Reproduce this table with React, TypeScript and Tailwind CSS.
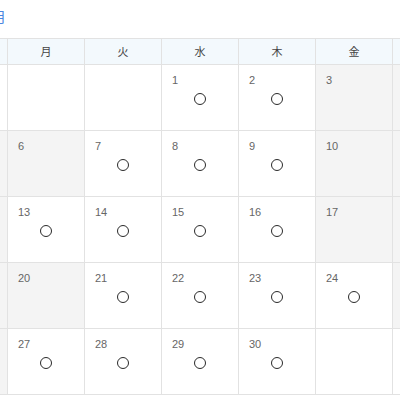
import React from 'react';

const WEEKDAYS = ['日', '月', '火', '水', '木', '金', '土'];

// closed days (besides weekends)
const CLOSED = [3, 6, 10, 17, 20];
const OPEN = [1, 2, 7, 8, 9, 13, 14, 15, 16, 21, 22, 23, 24, 27, 28, 29, 30];

const FIRST_WEEKDAY = 3; // 1日 = 水曜日
const DAYS_IN_MONTH = 30;

export default function App() {
  const cells: (number | null)[] = [];
  for (let i = 0; i < FIRST_WEEKDAY; i++) cells.push(null);
  for (let d = 1; d <= DAYS_IN_MONTH; d++) cells.push(d);
  while (cells.length % 7 !== 0) cells.push(null);

  return (
    <div
      className="w-[400px] h-[400px] overflow-hidden bg-white"
      style={{ fontFamily: '"Noto Sans CJK JP", "Noto Sans", sans-serif' }}
    >
      <div className="ml-[-69px] w-[539px]">
        {/* Month title */}
        <div className="h-[38px] w-[75px] pt-[6px] text-right text-[14px] leading-[20px] text-[#4a86e0]">
          11月
        </div>

        <div className="grid grid-cols-[repeat(7,77px)] border-t border-[#e2e2e2]">
          {WEEKDAYS.map(w => (
            <div
              key={w}
              className="h-[26px] flex items-center justify-center bg-[#f3f9fd] border-r border-b border-[#e2e2e2] text-[11px] text-[#444]"
            >
              {w}
            </div>
          ))}

          {cells.map((day, i) => {
            const weekday = i % 7;
            const gray =
              day !== null && (weekday === 0 || weekday === 6 || CLOSED.includes(day));
            const open = day !== null && OPEN.includes(day);
            return (
              <div
                key={i}
                className={`h-[66px] flex flex-col border-r border-b border-[#e2e2e2] ${
                  gray ? 'bg-[#f4f4f4]' : 'bg-white'
                }`}
              >
                {day !== null && (
                  <div className="pl-[10px] pt-[7px] text-[11px] leading-[16px] text-[#666] font-['Liberation_Sans',sans-serif]">
                    {day}
                  </div>
                )}
                {open && (
                  <div className="flex justify-center mt-[5px]">
                    <div className="w-[12px] h-[12px] rounded-full border-[1.5px] border-[#2a2a2a]" />
                  </div>
                )}
              </div>
            );
          })}
        </div>
      </div>
    </div>
  );
}
